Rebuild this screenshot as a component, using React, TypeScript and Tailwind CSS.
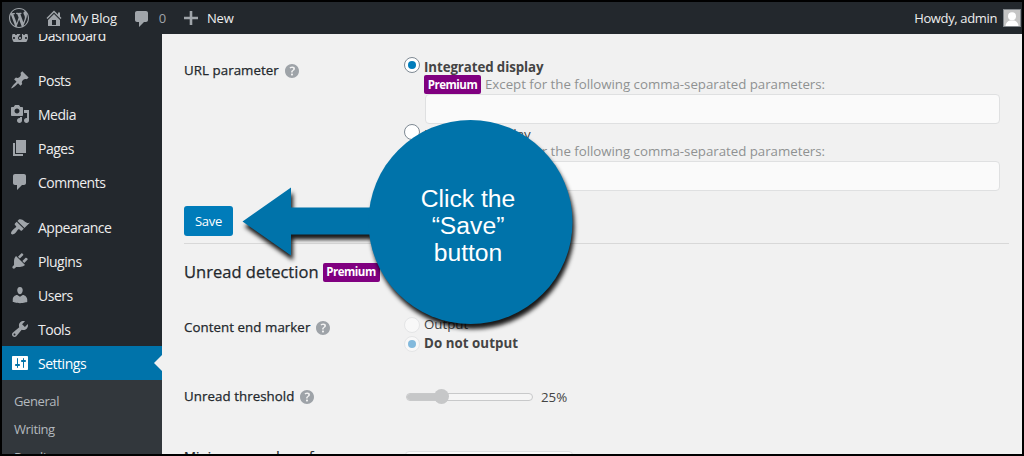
import type { ReactNode } from 'react';
import clsx from 'clsx';

// Dashicons, 20x20 grid
const ICONS = {
  wordpress:
    'M20 10c0-5.51-4.49-10-10-10C4.48 0 0 4.49 0 10c0 5.52 4.48 10 10 10 5.51 0 10-4.48 10-10zM7.78 15.37L4.37 6.22c.55-.02 1.17-.08 1.17-.08.5-.06.44-1.13-.06-1.11 0 0-1.45.11-2.37.11-.18 0-.37 0-.58-.01C4.12 2.69 6.87 1.11 10 1.11c2.33 0 4.45.87 6.05 2.34-.68-.11-1.65.39-1.65 1.58 0 .74.45 1.36.9 2.1.35.61.55 1.36.55 2.46 0 1.49-1.4 5-1.4 5l-3.03-8.37c.54-.02.82-.17.82-.17.5-.05.44-1.25-.06-1.22 0 0-1.44.12-2.38.12-.87 0-2.33-.12-2.33-.12-.5-.03-.56 1.2-.06 1.22l.92.08 1.26 3.41zM17.41 10c.24-.64.74-1.87.43-4.25.7 1.29 1.05 2.71 1.05 4.25 0 3.29-1.73 6.24-4.4 7.78.97-2.59 1.94-5.2 2.92-7.78zM6.1 18.09C3.12 16.65 1.11 13.53 1.11 10c0-1.3.23-2.48.72-3.59C3.25 10.3 4.67 14.2 6.1 18.09zm4.03-6.63l2.58 6.98c-.86.29-1.76.45-2.71.45-.79 0-1.57-.11-2.29-.33.81-2.38 1.62-4.74 2.42-7.1z',
  home: 'M16 8.5l1.53 1.53-1.06 1.06L10 4.6l-6.47 6.49-1.06-1.06L10 2.5l4 4v-2h2v4zm-6-2.46l6 5.99V18H4v-5.97zM12 17v-5H8v5h4z',
  comment: 'M5 2h9c1.1 0 2 .9 2 2v7c0 1.1-.9 2-2 2h-2l-5 5v-5H5c-1.1 0-2-.9-2-2V4c0-1.1.9-2 2-2z',
  plus: 'M17 8.7v2.6h-5.7V17H8.7v-5.7H3V8.7h5.7V3h2.6v5.7z',
  dashboard:
    'M3.76 17h12.48c1.1-1.37 1.76-3.11 1.76-5 0-4.42-3.58-8-8-8s-8 3.58-8 8c0 1.89.66 3.63 1.76 5zM10 6c.55 0 1 .45 1 1s-.45 1-1 1-1-.45-1-1 .45-1 1-1zM6 8c.55 0 1 .45 1 1s-.45 1-1 1-1-.45-1-1 .45-1 1-1zm8 0c.55 0 1 .45 1 1s-.45 1-1 1-1-.45-1-1 .45-1 1-1zm-5.37 3.55L12 7v6c0 1.1-.9 2-2 2s-2-.9-2-2c0-.57.24-1.08.63-1.45zM4 12c.55 0 1 .45 1 1s-.45 1-1 1-1-.45-1-1 .45-1 1-1zm12 0c.55 0 1 .45 1 1s-.45 1-1 1-1-.45-1-1 .45-1 1-1zm-5 1c0-.55-.45-1-1-1s-1 .45-1 1 .45 1 1 1 1-.45 1-1z',
  post: 'M10.44 3.02l1.82-1.82 6.36 6.35-1.83 1.82c-1.05-.68-2.48-.57-3.41.36l-.75.75c-.92.93-1.04 2.35-.35 3.41l-1.83 1.82-2.41-2.41-2.8 2.79c-.42.42-3.38 2.71-3.8 2.29s1.86-3.39 2.28-3.81l2.79-2.79L4.1 9.36l1.83-1.82c1.05.69 2.48.57 3.4-.36l.75-.75c.93-.92 1.05-2.35.36-3.41z',
  media:
    'M13 11V4c0-.55-.45-1-1-1h-1.67L9 1H5L3.67 3H2c-.55 0-1 .45-1 1v7c0 .55.45 1 1 1h10c.55 0 1-.45 1-1zM7 4.5c1.38 0 2.5 1.12 2.5 2.5S8.38 9.5 7 9.5 4.5 8.38 4.5 7 5.62 4.5 7 4.5zM14 6h5v10.5c0 1.38-1.12 2.5-2.5 2.5S14 17.88 14 16.5s1.12-2.5 2.5-2.5c.17 0 .34.02.5.05V9h-3V6zm-4 8.05V13h2v3.5c0 1.38-1.12 2.5-2.5 2.5S7 17.88 7 16.5 8.12 14 9.5 14c.17 0 .34.02.5.05z',
  page: 'M6 15V2h10v13H6zm-1 1h8v2H3V5h2v11z',
  appearance:
    'M14.48 11.06L7.41 3.99l1.5-1.5c.5-.56 2.3-.47 3.51.32 1.21.8 1.43 1.28 2.91 2.1 1.18.64 2.45 1.26 4.45.85zm-.71.71L6.7 4.7 4.93 6.47c-.39.39-.39 1.02 0 1.41l1.06 1.06c.39.39.39 1.03 0 1.42-.6.6-1.43 1.11-2.21 1.69-.35.26-.7.53-1.01.84C1.43 14.23.4 16.08 1.4 17.07c.99 1 2.84-.03 4.18-1.36.31-.31.58-.66.85-1.02.57-.78 1.08-1.61 1.69-2.21.39-.39 1.02-.39 1.41 0l1.06 1.06c.39.39 1.02.39 1.41 0z',
  plugins:
    'M13.11 4.36L9.87 7.6 8 5.73l3.24-3.24c.35-.34 1.05-.2 1.56.32.52.51.66 1.21.31 1.55zm-8 1.77l.91-1.12 9.01 9.01-1.19.84c-.71.71-2.63 1.16-3.82 1.16H6.14L4.9 17.26c-.59.59-1.54.59-2.12 0-.59-.58-.59-1.53 0-2.12l1.24-1.24v-3.88c0-1.13.4-3.19 1.09-3.89zm7.26 3.97l3.24-3.24c.34-.35 1.04-.21 1.55.31.52.51.66 1.21.31 1.55l-3.24 3.25z',
  users:
    'M10 9.25c-2.27 0-2.73-3.44-2.73-3.44C7 4.02 7.82 2 9.97 2c2.16 0 2.98 2.02 2.71 3.81 0 0-.41 3.44-2.68 3.44zm0 2.57L12.72 10c2.39 0 4.52 2.33 4.52 4.53v2.49s-3.65 1.13-7.24 1.13c-3.65 0-7.24-1.13-7.24-1.13v-2.49c0-2.25 1.94-4.48 4.47-4.48z',
  tools:
    'M16.68 9.77c-1.34 1.34-3.3 1.67-4.95.99l-5.41 6.52c-.99.99-2.59.99-3.58 0s-.99-2.59 0-3.57l6.52-5.42c-.68-1.65-.35-3.61.99-4.95 1.28-1.28 3.12-1.62 4.72-1.06l-2.89 2.89 2.82 2.82 2.86-2.87c.53 1.58.18 3.39-1.08 4.65zM3.81 16.21c.4.39 1.04.39 1.43 0 .4-.4.4-1.04 0-1.43-.39-.4-1.03-.4-1.43 0-.39.39-.39 1.03 0 1.43z',
  settings:
    'M18 16V4c0-.55-.45-1-1-1H3c-.55 0-1 .45-1 1v12c0 .55.45 1 1 1h14c.55 0 1-.45 1-1zM8 11h1c.55 0 1 .45 1 1s-.45 1-1 1H8v1.5c0 .28-.22.5-.5.5s-.5-.22-.5-.5V13H6c-.55 0-1-.45-1-1s.45-1 1-1h1V5.5c0-.28.22-.5.5-.5s.5.22.5.5V11zm5-2h-1c-.55 0-1-.45-1-1s.45-1 1-1h1V5.5c0-.28.22-.5.5-.5s.5.22.5.5V7h1c.55 0 1 .45 1 1s-.45 1-1 1h-1v5.5c0 .28-.22.5-.5.5s-.5-.22-.5-.5V9z',
  help: 'M17 10c0-3.87-3.14-7-7-7-3.87 0-7 3.13-7 7s3.13 7 7 7c3.86 0 7-3.13 7-7zm-6.3 1.48H9.14v-.43c0-.38.08-.7.24-.98s.46-.57.88-.89c.41-.29.68-.53.81-.71.14-.18.2-.39.2-.62 0-.25-.09-.44-.28-.58-.19-.13-.45-.19-.79-.19-.58 0-1.25.15-2 .46l-.64-1.28c.87-.49 1.8-.74 2.77-.74.81 0 1.45.2 1.92.58.48.39.71.91.71 1.55 0 .43-.09.8-.29 1.11-.19.32-.57.67-1.11 1.06-.38.28-.61.49-.71.63-.1.15-.15.34-.15.57v.35zm-1.47 2.74c-.18-.17-.27-.42-.27-.73 0-.33.08-.58.26-.75s.43-.25.77-.25c.32 0 .57.09.75.26s.27.42.27.74c0 .3-.09.55-.27.72-.18.18-.43.27-.75.27-.33 0-.58-.09-.76-.26z',
};

type IconName = keyof typeof ICONS;

function Dashicon({ name, className = 'size-5' }: { name: IconName; className?: string }) {
  return (
    <svg viewBox="0 0 20 20" fill="currentColor" fillRule="evenodd" className={clsx('shrink-0', className)}>
      <path d={ICONS[name]} />
    </svg>
  );
}

const menuGroups: { icon: IconName; label: string }[][] = [
  [{ icon: 'dashboard', label: 'Dashboard' }],
  [
    { icon: 'post', label: 'Posts' },
    { icon: 'media', label: 'Media' },
    { icon: 'page', label: 'Pages' },
    { icon: 'comment', label: 'Comments' },
  ],
  [
    { icon: 'appearance', label: 'Appearance' },
    { icon: 'plugins', label: 'Plugins' },
    { icon: 'users', label: 'Users' },
    { icon: 'tools', label: 'Tools' },
    { icon: 'settings', label: 'Settings' },
  ],
];

function AdminBar() {
  return (
    <header className="flex h-8 shrink-0 items-center bg-[#23282d] text-[13px] tracking-[-0.2px] text-[#eee]">
      <Dashicon name="wordpress" className="ml-[7px] size-5 text-[#a0a5aa]" />
      <Dashicon name="home" className="ml-[15px] size-5 text-[#a0a5aa]" />
      <span className="mt-px ml-[6px]">My Blog</span>
      <Dashicon name="comment" className="mt-0.5 ml-[15px] size-5 text-[#a0a5aa]" />
      <span className="mt-px ml-[7px] text-[#a0a5aa]">0</span>
      <Dashicon name="plus" className="ml-[15px] size-5 text-[#a0a5aa]" />
      <span className="mt-px ml-1.5">New</span>
      <span className="mt-px ml-auto tracking-[-0.36px]">Howdy, admin</span>
      <svg viewBox="0 0 18 18" className="mr-px ml-1.5 size-[18px]">
        <rect x="0.5" y="0.5" width="17" height="17" fill="#c5c5c5" stroke="#82878c" />
        <circle cx="9" cy="7.2" r="4" fill="#fff" />
        <path d="M2.5 17c.3-3 1.9-4.6 4.3-5.5h4.4c2.4.9 4 2.5 4.3 5.5z" fill="#fff" />
      </svg>
    </header>
  );
}

function Sidebar() {
  return (
    <nav className="w-40 shrink-0 overflow-hidden bg-[#23282d]">
      <div className="-mt-4 flex flex-col gap-[11px]">
        {menuGroups.map((group) => (
          <ul key={group[0].label}>
            {group.map(({ icon, label }) => {
              const active = label === 'Settings';
              return (
                <li
                  key={label}
                  className={clsx(
                    'flex h-[34px] items-center gap-2 pl-2 text-sm tracking-[-0.48px]',
                    active ? 'bg-[#0073aa] text-white' : 'text-[#eee]',
                  )}
                >
                  <Dashicon name={icon} className={active ? 'size-5 text-white' : 'size-5 text-[#a0a5aa]'} />
                  <span className="mt-px">{label}</span>
                  {active && <span className="ml-auto border-8 border-l-0 border-transparent border-r-[#f1f1f1]" />}
                </li>
              );
            })}
          </ul>
        ))}
      </div>
      <ul className="h-24 bg-[#32373c] pt-[7px] pl-3 text-[13px] leading-7 tracking-[-0.4px] text-[#b4b9be]">
        <li>General</li>
        <li>Writing</li>
        <li>Reading</li>
      </ul>
    </nav>
  );
}

function Premium() {
  return (
    <span className="flex h-[19px] w-[57px] shrink-0 items-center justify-center rounded-[2px] bg-[#800080] text-[11.5px] font-bold tracking-[-0.5px] text-white">
      Premium
    </span>
  );
}

function Radio({ checked, disabled }: { checked?: boolean; disabled?: boolean }) {
  return (
    <span
      className={clsx(
        'flex size-4 shrink-0 items-center justify-center rounded-full border',
        disabled ? 'border-[#e4e5e6] bg-[#f8f8f8]' : 'border-[#7e8993] bg-white',
      )}
    >
      {checked && <span className={clsx('size-2 rounded-full', disabled ? 'bg-[#82b9dc]' : 'bg-[#007cba]')} />}
    </span>
  );
}

function FieldLabel({ children }: { children: ReactNode }) {
  return (
    <div className="flex h-5 w-[220px] shrink-0 items-center gap-[3px] text-[13.3px] tracking-[0.06px] text-[#23282d]">
      <span className="[-webkit-text-stroke:0.25px]">{children}</span>
      <Dashicon name="help" className="size-5 text-[#9ea3a8]" />
    </div>
  );
}

function DisplayOption({ label, checked }: { label: string; checked?: boolean }) {
  return (
    <div className="flex h-[67px] gap-1">
      <Radio checked={checked} />
      <div className="w-[576px]">
        <div className={clsx('h-[18px] leading-[21px]', checked && 'font-bold tracking-[-0.09px]')}>{label}</div>
        <div className="flex h-[19px] items-center gap-1 text-[#8f9192]">
          <Premium />
          <span>Except for the following comma-separated parameters:</span>
        </div>
        <div className="ml-px h-[30px] rounded border border-[#dfe0e1] bg-[#fafafa]" />
      </div>
    </div>
  );
}

function SettingsForm() {
  return (
    <main className="flex-1 overflow-hidden pt-[23px] pl-[22px] text-[13.3px] tracking-[-0.03px] text-[#444]">
      <div className="flex h-[149px]">
        <div className="pt-1">
          <FieldLabel>URL parameter</FieldLabel>
        </div>
        <div>
          <DisplayOption label="Integrated display" checked />
          <DisplayOption label="Individual display" />
        </div>
      </div>
      <button className="block h-[30px] w-[49px] rounded-[3px] bg-[#007cba] pt-px text-[13px] tracking-[-0.28px] text-white">
        Save
      </button>
      <hr className="mt-[7px] w-[825px] border-t-[#d8d8d8]" />
      <div className="mt-[17px] flex h-[22px] items-center gap-1">
        <h3 className="text-[16.5px] tracking-[0.02px] text-[#23282d] [-webkit-text-stroke:0.25px]">Unread detection</h3>
        <Premium />
      </div>
      <div className="mt-[32px] flex h-[72px]">
        <div className="pt-[3px]">
          <FieldLabel>Content end marker</FieldLabel>
        </div>
        <div className="leading-[19px]">
          <div className="flex h-[19px] items-center gap-1">
            <Radio disabled />
            <span>Output</span>
          </div>
          <div className="flex h-[19px] items-center gap-1">
            <Radio checked disabled />
            <span className="font-bold tracking-[0.05px]">Do not output</span>
          </div>
        </div>
      </div>
      <div className="flex h-5 items-center">
        <FieldLabel>Unread threshold</FieldLabel>
        <div className="relative ml-[2px] h-2 w-[127px] rounded-full border border-[#c8c9ca] bg-[#f5f5f5]">
          <div className="h-full w-[35px] rounded-l-full bg-[#c6c7c8]" />
          <div className="absolute -top-[5px] left-[27px] size-[15px] rounded-full bg-[#c6c7c8]" />
        </div>
        <span className="mt-px ml-2">25%</span>
      </div>
      <div className="mt-[40px] flex">
        <div className="w-[221px] text-[13.3px] tracking-[0.06px] text-[#23282d] [-webkit-text-stroke:0.25px]">
          Minimum number of
        </div>
        <div className="mt-1 h-[30px] w-[168px] rounded border border-[#dfe0e1] bg-[#fafafa]" />
      </div>
    </main>
  );
}

// Arrow and bubble laid over the page, pointing at the Save button
function Callout() {
  return (
    <div className="absolute top-[108px] left-[228px] h-[240px] w-[360px]">
      <svg viewBox="230 110 360 240" className="size-full drop-shadow-[2px_5px_2px_rgba(0,0,0,0.9)]">
        <path d="M242.5 221.5L291 187.5V207.5H400V234.5H291V255.5Z" fill="#0073aa" />
        <circle cx="470.5" cy="222" r="102" fill="#0073aa" />
      </svg>
      <p className="absolute top-[75px] left-[138px] w-[200px] text-center font-['Liberation_Sans',Arial,sans-serif] text-[24.7px] leading-[27px] text-white">
        Click the
        <br />
        “Save”
        <br />
        button
      </p>
    </div>
  );
}

export default function App() {
  return (
    <div className="relative flex h-[456px] w-[1024px] flex-col overflow-hidden border-2 border-black bg-[#f1f1f1] font-['Open_Sans','Noto_Sans',sans-serif]">
      <AdminBar />
      <div className="flex min-h-0 flex-1">
        <Sidebar />
        <SettingsForm />
      </div>
      <Callout />
    </div>
  );
}
